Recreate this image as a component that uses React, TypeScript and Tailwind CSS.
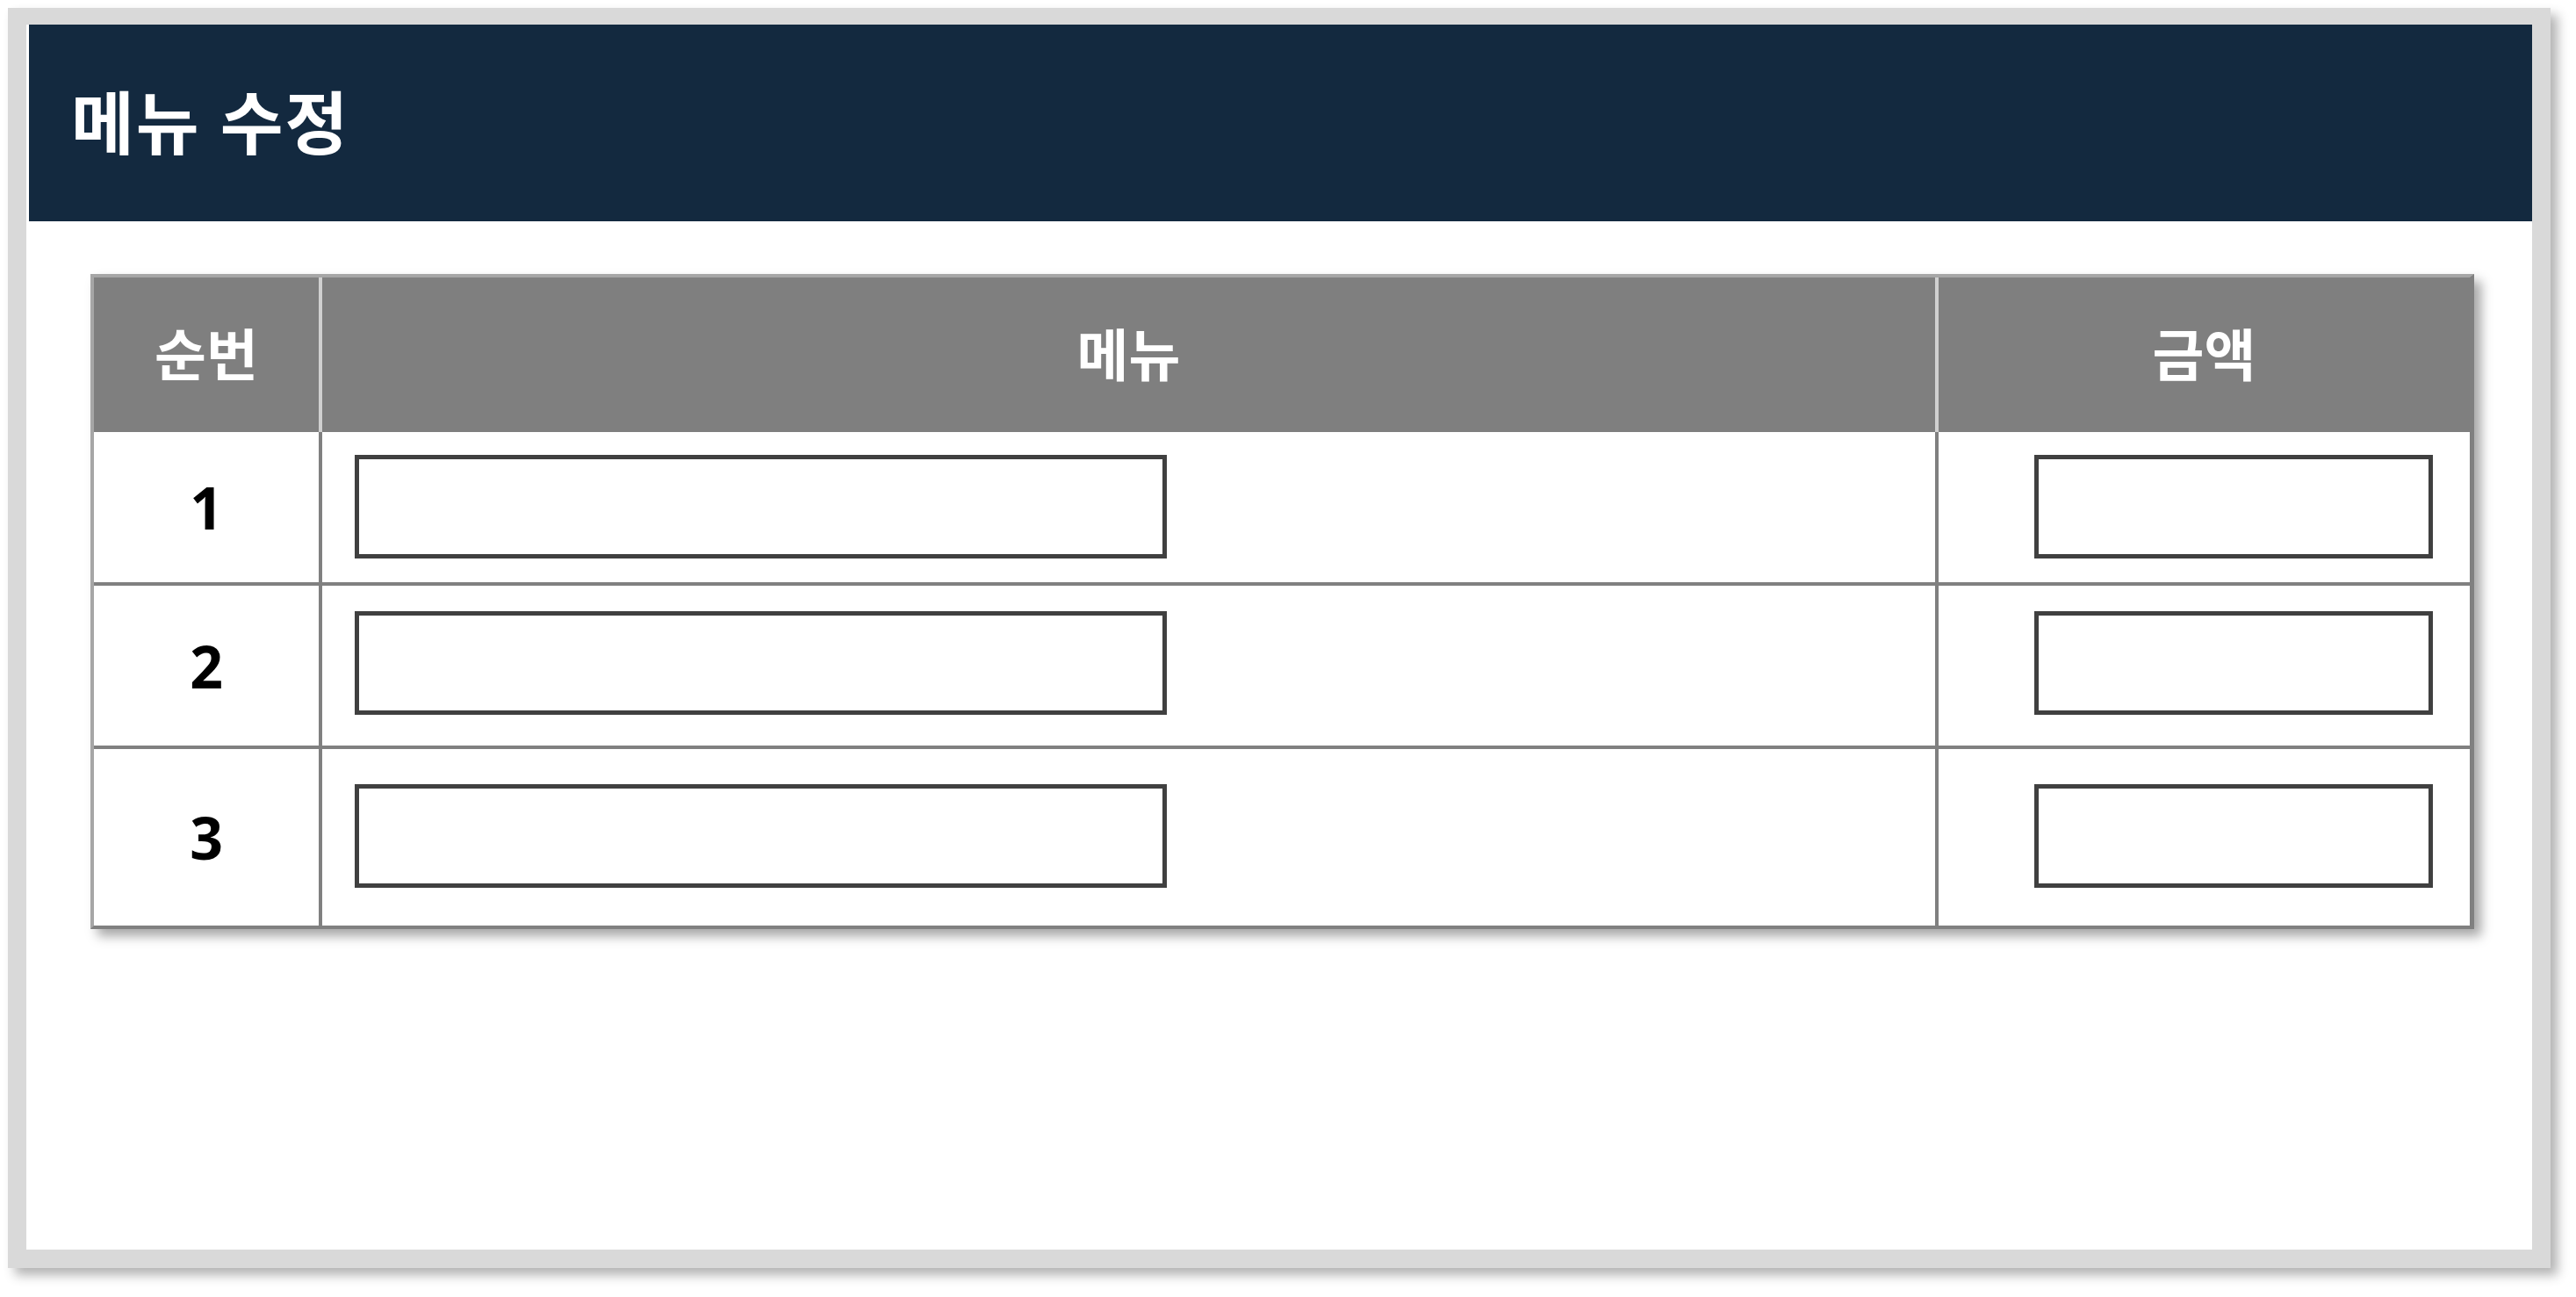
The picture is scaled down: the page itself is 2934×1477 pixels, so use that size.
import React from 'react';

const rows = [
    { no: 1, h: 'h-[175px]', pt: 'pt-[26px]', border: true },
    { no: 2, h: 'h-[186px]', pt: 'pt-[29px]', border: true },
    { no: 3, h: 'h-[201px]', pt: 'pt-[40px]', border: false },
];

const font = "font-['Open_Sans','Noto_Sans_CJK_KR',sans-serif]";

const App: React.FC = () => {
    return (
        <div className="w-[2934px] h-[1477px] bg-white p-[9px]">
            <div className="w-[2896px] h-[1435px] border-[21px] border-t-[19px] border-[#d9d9d9] bg-white shadow-[8px_8px_12px_rgba(0,0,0,0.3)] flex flex-col">
                <div className="ml-[3px] h-[224px] bg-[#13293f] flex items-center pl-[48px]">
                    <h1 className={`${font} text-white font-bold text-[78px] leading-none tracking-[2px]`}>메뉴 수정</h1>
                </div>
                <div className="pl-[73px] pt-[60px]">
                    <div className="w-[2715px] border-t-4 border-l-4 border-[#a6a6a6] border-r-[5px] border-b-4 border-r-[#808080] border-b-[#808080] shadow-[8px_8px_12px_rgba(0,0,0,0.35)]">
                        <div className={`grid grid-cols-[260px_1841px_605px] h-[176px] bg-[#7f7f7f] text-white font-bold text-[64px] ${font}`}>
                            <div className="border-r-4 border-[#d0d0d0] flex items-center justify-center">순번</div>
                            <div className="border-r-4 border-[#d0d0d0] flex items-center justify-center">메뉴</div>
                            <div className="flex items-center justify-center">금액</div>
                        </div>
                        {rows.map(row => (
                            <div key={row.no} className={`grid grid-cols-[260px_1841px_605px] ${row.h} ${row.border ? 'border-b-4 border-[#808080]' : ''}`}>
                                <div className={`border-r-4 border-[#808080] flex items-center justify-center text-black font-bold text-[66px] ${font}`}>{row.no}</div>
                                <div className={`border-r-4 border-[#808080] flex items-start ${row.pt} pl-[37px]`}>
                                    <input type="text" className="w-[925px] h-[118px] border-[5px] border-[#404040] bg-white outline-none" />
                                </div>
                                <div className={`flex items-start ${row.pt} justify-end pr-[42px]`}>
                                    <input type="text" className="w-[454px] h-[118px] border-[5px] border-[#404040] bg-white outline-none" />
                                </div>
                            </div>
                        ))}
                    </div>
                </div>
            </div>
        </div>
    );
};

export default App;
